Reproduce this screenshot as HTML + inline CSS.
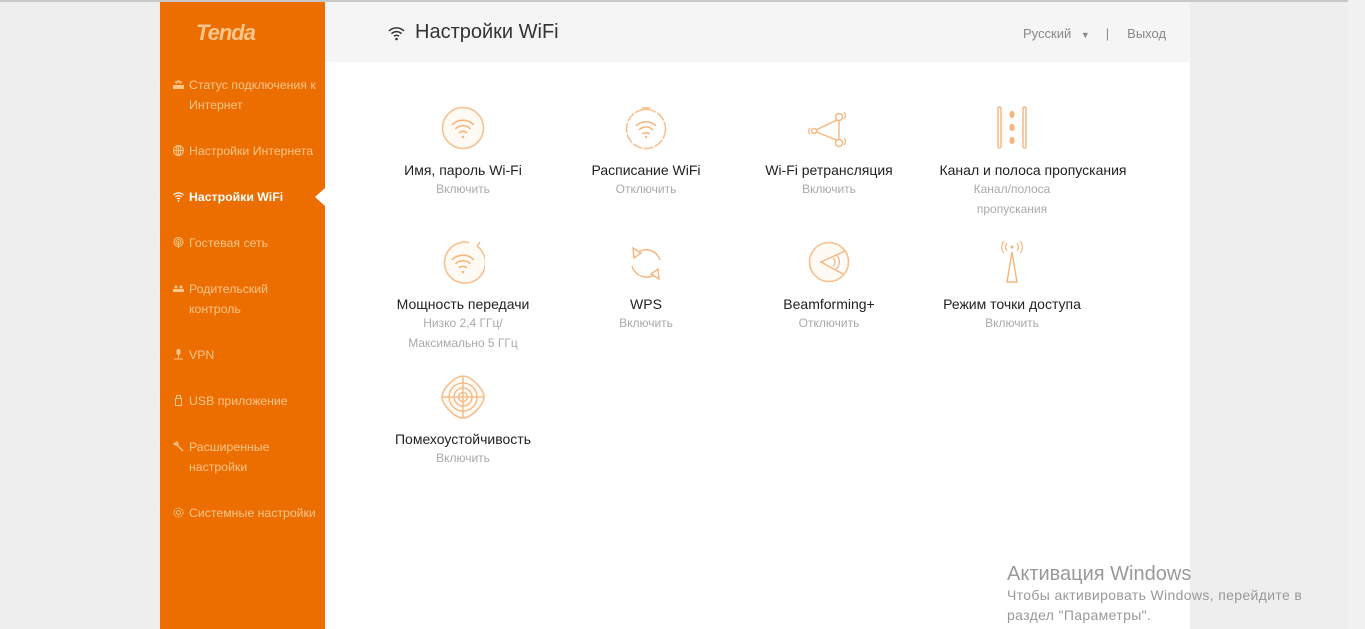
<!DOCTYPE html>
<html><head><meta charset="utf-8"><style>
*{margin:0;padding:0;box-sizing:border-box}
body{width:1365px;height:629px;overflow:hidden;background:#eeeeee;font-family:"Liberation Sans",sans-serif;position:relative}
.topline{position:absolute;left:0;top:0;width:1348px;height:2px;background:#c8c8c8}
.scroll{position:absolute;right:0;top:0;width:17px;height:629px;background:#f1f1f1}
.side{position:absolute;left:160px;top:2px;width:165px;height:627px;background:#ed6e00}
.logo{position:absolute;left:36px;top:18px;font:italic bold 22px "Liberation Sans",sans-serif;color:#fcc58c;letter-spacing:-1px}
.nav{position:absolute;left:13px;font-size:12.3px;color:#fcc58c;line-height:20px}
.nav .ic{position:absolute;left:0;top:4px;width:11px;height:11px}
.nav span{display:block;padding-left:16px}
.nav.act{color:#fff;font-weight:bold}
.arrow{position:absolute;left:315px;top:188px;width:0;height:0;border-top:9px solid transparent;border-bottom:9px solid transparent;border-right:10px solid #fff}
.head{position:absolute;left:325px;top:2px;width:865px;height:60px;background:#f5f5f5}
.title{position:absolute;left:90px;top:19px;font-size:20px;color:#333}
.lang{position:absolute;left:698px;top:24px;font-size:13px;color:#888}
.main{position:absolute;left:325px;top:62px;width:865px;height:567px;background:#fff}
.it{position:absolute;width:200px;text-align:center}
.it svg{display:block;margin:0 auto}
.it .t{font-size:14px;color:#222;margin-top:11px;line-height:18px;white-space:nowrap}
.it .s{font-size:12px;color:#aaa;line-height:20px}
.wm{position:absolute;left:1007px;top:563px;color:#999;font-size:20px}
.wm2{position:absolute;left:1007px;top:585px;color:#999;font-size:14px;line-height:20px;letter-spacing:0.35px}
</style></head><body>
<div class="topline"></div>
<div class="scroll"></div>
<div class="side">
<div class="logo">Tenda</div>
<div class="nav" style="top:73px"><svg class="ic" viewBox="0 0 11 11"><rect x="0" y="6" width="11" height="4" fill="#fcc58c"/><path d="M2 4a4 4 0 0 1 7 0M3.5 5a2 2 0 0 1 4 0" stroke="#fcc58c" fill="none"/></svg><span>Статус подключения к<br>Интернет</span></div>
<div class="nav" style="top:139px"><svg class="ic" viewBox="0 0 11 11"><circle cx="5.5" cy="5.5" r="5" stroke="#fcc58c" fill="none"/><path d="M0.5 5.5h10M5.5 0.5v10" stroke="#fcc58c"/><ellipse cx="5.5" cy="5.5" rx="2.3" ry="5" stroke="#fcc58c" fill="none"/></svg><span>Настройки Интернета</span></div>
<div class="nav act" style="top:185px"><svg class="ic" viewBox="0 0 11 11"><path d="M0.5 4a7 7 0 0 1 10 0M2.3 6a4.5 4.5 0 0 1 6.4 0M4 8a2 2 0 0 1 3 0" stroke="#fff" fill="none" stroke-width="1.2"/><circle cx="5.5" cy="10" r="0.9" fill="#fff"/></svg><span>Настройки WiFi</span></div>
<div class="nav" style="top:231px"><svg class="ic" viewBox="0 0 11 11"><circle cx="5.5" cy="5" r="4.5" stroke="#fcc58c" fill="none"/><circle cx="5.5" cy="5" r="2.5" stroke="#fcc58c" fill="none"/><circle cx="5.5" cy="5" r="1" fill="#fcc58c"/><path d="M5.5 6v5" stroke="#fcc58c"/></svg><span>Гостевая сеть</span></div>
<div class="nav" style="top:277px"><svg class="ic" viewBox="0 0 11 11"><rect x="0" y="6" width="11" height="3" fill="#fcc58c"/><circle cx="3" cy="4" r="1.5" fill="#fcc58c"/><circle cx="8" cy="4" r="1.5" fill="#fcc58c"/></svg><span>Родительский<br>контроль</span></div>
<div class="nav" style="top:343px"><svg class="ic" viewBox="0 0 11 11"><rect x="3.5" y="0" width="4" height="6" rx="2" fill="#fcc58c"/><path d="M5.5 6v3M1 10h9" stroke="#fcc58c"/></svg><span>VPN</span></div>
<div class="nav" style="top:389px"><svg class="ic" viewBox="0 0 11 11"><rect x="2.5" y="3.5" width="6" height="7" stroke="#fcc58c" fill="none"/><rect x="3.5" y="0.5" width="4" height="3" stroke="#fcc58c" fill="none"/></svg><span>USB приложение</span></div>
<div class="nav" style="top:435px"><svg class="ic" viewBox="0 0 11 11"><path d="M1 3l3-2 1 2-2 1zM4 4l6 6" stroke="#fcc58c" fill="none" stroke-width="1.4"/></svg><span>Расширенные<br>настройки</span></div>
<div class="nav" style="top:501px"><svg class="ic" viewBox="0 0 11 11"><circle cx="5.5" cy="5.5" r="4.5" stroke="#fcc58c" fill="none" stroke-dasharray="2 1"/><circle cx="5.5" cy="5.5" r="2" stroke="#fcc58c" fill="none"/></svg><span>Системные настройки</span></div>
</div>
<div class="arrow"></div>
<div class="head">
<svg style="position:absolute;left:63px;top:23px" width="17" height="16" viewBox="0 0 17 16"><path d="M1 6a10.5 10.5 0 0 1 15 0M3.5 8.7a7 7 0 0 1 10 0M6 11.3a3.5 3.5 0 0 1 5 0" stroke="#333" fill="none" stroke-width="1.5"/><circle cx="8.5" cy="14" r="1.3" fill="#333"/></svg>
<div class="title">Настройки WiFi</div>
<div class="lang">Русский <span style="font-size:9px;margin-left:6px">▼</span><span style="margin:0 18px 0 16px">|</span>Выход</div>
</div>
<div class="main"></div>

<div class="it" style="left:363px;top:106px"><svg width="44" height="44" viewBox="0 0 44 44"><circle cx="22" cy="22" r="20.5" fill="#fffaf4" stroke="#f7c08f" stroke-width="1.6"/><path d="M11 19a15 15 0 0 1 22 0M14.5 23a10 10 0 0 1 15 0M18 27a5.5 5.5 0 0 1 8 0" stroke="#f7b57c" fill="none" stroke-width="1.6"/><circle cx="22" cy="31" r="1.3" fill="#f7b57c"/></svg><div class="t">Имя, пароль Wi-Fi</div><div class="s">Включить</div></div>

<div class="it" style="left:546px;top:106px"><svg width="44" height="44" viewBox="0 0 44 44"><circle cx="22" cy="23" r="19.5" fill="none" stroke="#f7c08f" stroke-width="1.6" stroke-dasharray="10 1.5"/><path d="M18 2h8M22 2v2" stroke="#f7b57c" stroke-width="1.5"/><path d="M12 20a14 14 0 0 1 20 0M15 24a9.5 9.5 0 0 1 14 0M18.5 28a5 5 0 0 1 7 0" stroke="#f7b57c" fill="none" stroke-width="1.5"/><circle cx="22" cy="31" r="1.2" fill="#f7b57c"/></svg><div class="t">Расписание WiFi</div><div class="s">Отключить</div></div>

<div class="it" style="left:729px;top:106px"><svg width="44" height="44" viewBox="0 0 44 44"><path d="M7 25L32 13M7 25L32 35M32 13V35" stroke="#f7b57c" fill="none" stroke-width="1.4"/><circle cx="32" cy="11" r="3.5" fill="#fff" stroke="#f7b57c" stroke-width="1.4"/><circle cx="32" cy="37" r="3.5" fill="#fff" stroke="#f7b57c" stroke-width="1.4"/><circle cx="7" cy="25" r="2.5" fill="#fff" stroke="#f7b57c" stroke-width="1.4"/><path d="M37 6a5 5 0 0 1 0 7M37 32a5 5 0 0 1 0 7M3 22a4 4 0 0 0 0 6" stroke="#f7b57c" fill="none" stroke-width="1.2"/></svg><div class="t">Wi-Fi ретрансляция</div><div class="s">Включить</div></div>

<div class="it" style="left:912px;top:106px"><svg width="44" height="44" viewBox="0 0 44 44"><rect x="8" y="1" width="3" height="41" rx="1.5" fill="none" stroke="#f7b57c" stroke-width="1.4"/><rect x="33" y="1" width="3" height="41" rx="1.5" fill="none" stroke="#f7b57c" stroke-width="1.4"/><rect x="19.5" y="5" width="5" height="7" rx="2.5" fill="#f7b57c"/><rect x="19.5" y="18" width="5" height="7" rx="2.5" fill="#f7b57c"/><rect x="19.5" y="31" width="5" height="7" rx="2.5" fill="#f7b57c"/></svg><div class="t" style="position:relative;left:21px">Канал и полоса пропускания</div><div class="s">Канал/полоса<br>пропускания</div></div>

<div class="it" style="left:363px;top:240px"><svg width="44" height="44" viewBox="0 0 44 44"><path d="M36 6A20.5 20.5 0 1 1 28 2.5" fill="#fffaf4" stroke="#f7c08f" stroke-width="1.6"/><path d="M36 6l3-4" stroke="#f7b57c" stroke-width="1.4"/><path d="M11 20a15 15 0 0 1 22 0M14.5 24a10 10 0 0 1 15 0M18 28a5.5 5.5 0 0 1 8 0" stroke="#f7b57c" fill="none" stroke-width="1.6"/><circle cx="22" cy="32" r="1.3" fill="#f7b57c"/></svg><div class="t">Мощность передачи</div><div class="s">Низко 2,4 ГГц/<br>Максимально 5 ГГц</div></div>

<div class="it" style="left:546px;top:240px"><svg width="44" height="44" viewBox="0 0 44 44"><path d="M14 12A15 15 0 0 1 36 20M30 35A15 15 0 0 1 8 26" stroke="#f7b57c" fill="none" stroke-width="1.4"/><path d="M9 8l1 10 7-5zM35 39l-1-10-7 5z" fill="none" stroke="#f7b57c" stroke-width="1.4"/></svg><div class="t">WPS</div><div class="s">Включить</div></div>

<div class="it" style="left:729px;top:240px"><svg width="44" height="44" viewBox="0 0 44 44"><circle cx="22" cy="22" r="19.5" fill="#fffaf4" stroke="#f7c08f" stroke-width="1.6"/><path d="M38 11L14 22L36 34" fill="#fff" stroke="#f7b57c" stroke-width="1.4"/><path d="M26 18a5 5 0 0 1 0 8M29 15a9 9 0 0 1 0 14" stroke="#f7b57c" fill="none" stroke-width="1.3"/></svg><div class="t">Beamforming+</div><div class="s">Отключить</div></div>

<div class="it" style="left:912px;top:240px"><svg width="44" height="44" viewBox="0 0 44 44"><path d="M17 42L22 12L27 42zM17 42h10" fill="none" stroke="#f7b57c" stroke-width="1.4"/><circle cx="22" cy="7" r="1.5" fill="#f7b57c"/><path d="M17 3a6 6 0 0 0 0 8M27 3a6 6 0 0 1 0 8M14 1a9 9 0 0 0 0 12M30 1a9 9 0 0 1 0 12" stroke="#f7b57c" fill="none" stroke-width="1.2"/></svg><div class="t">Режим точки доступа</div><div class="s">Включить</div></div>

<div class="it" style="left:363px;top:375px"><svg width="44" height="44" viewBox="0 0 44 44"><path d="M22 1C30 1 43 14 43 22C43 30 30 43 22 43C14 43 1 30 1 22C1 14 14 1 22 1Z" fill="#fffaf4" stroke="#f7c08f" stroke-width="1.6"/><circle cx="22" cy="22" r="14" fill="none" stroke="#f7b57c" stroke-width="1.3"/><circle cx="22" cy="22" r="9" fill="none" stroke="#f7b57c" stroke-width="1.3"/><circle cx="22" cy="22" r="4.5" fill="none" stroke="#f7b57c" stroke-width="1.3"/><path d="M22 1v42M1 22h42" stroke="#f7b57c" stroke-width="1.3"/></svg><div class="t">Помехоустойчивость</div><div class="s">Включить</div></div>

<div class="wm">Активация Windows</div>
<div class="wm2">Чтобы активировать Windows, перейдите в<br>раздел "Параметры".</div>
</body></html>
